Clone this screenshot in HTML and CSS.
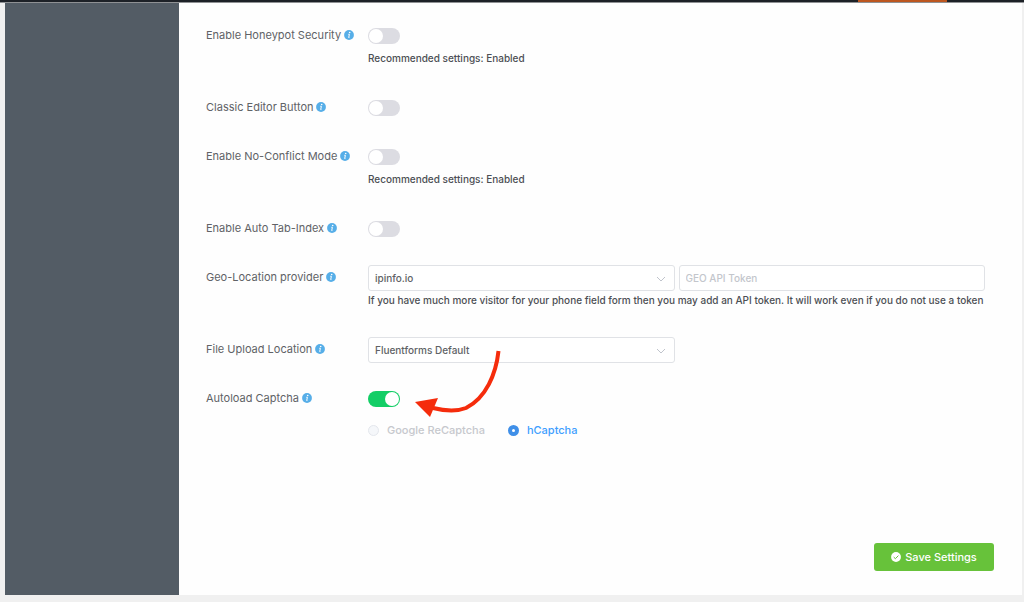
FILE: index.html
```
<!DOCTYPE html>
<html lang="en">
<head>
<meta charset="utf-8">
<title>Global Settings</title>
<link rel="stylesheet" href="styles.css">
</head>
<body>
<svg class="sprite" aria-hidden="true">
  <symbol id="info" viewBox="0 0 10 10">
    <circle cx="5" cy="5" r="4.9" fill="#56aee8"/>
    <circle cx="5.7" cy="2.5" r=".8" fill="#fff"/>
    <path d="M4.3 4.3h1.1L4.7 7.6h.7" fill="none" stroke="#fff" stroke-width="1"/>
  </symbol>
  <symbol id="chevron" viewBox="0 0 10 10">
    <path d="M1 3l4 4 4-4" fill="none" stroke="#c0c4cc" stroke-width="1"/>
  </symbol>
</svg>
<header class="topbar"><div class="topbar-tab"></div></header>
<div class="layout">
  <aside class="sidebar"></aside>
  <main class="content">
    <form class="form">
      <div class="row">
        <label class="label" for="honeypot">Enable Honeypot Security <svg class="info"><use href="#info"/></svg></label>
        <div class="control">
          <div class="line"><input class="switch" type="checkbox" role="switch" id="honeypot"></div>
          <p class="help">Recommended settings: Enabled</p>
        </div>
      </div>
      <div class="row">
        <label class="label" for="classic">Classic Editor Button <svg class="info"><use href="#info"/></svg></label>
        <div class="control">
          <div class="line"><input class="switch" type="checkbox" role="switch" id="classic"></div>
        </div>
      </div>
      <div class="row">
        <label class="label" for="conflict">Enable No-Conflict Mode <svg class="info"><use href="#info"/></svg></label>
        <div class="control">
          <div class="line"><input class="switch" type="checkbox" role="switch" id="conflict"></div>
          <p class="help">Recommended settings: Enabled</p>
        </div>
      </div>
      <div class="row">
        <label class="label" for="tabindex">Enable Auto Tab-Index <svg class="info"><use href="#info"/></svg></label>
        <div class="control">
          <div class="line"><input class="switch" type="checkbox" role="switch" id="tabindex"></div>
        </div>
      </div>
      <div class="row">
        <label class="label" for="geo">Geo-Location provider <svg class="info"><use href="#info"/></svg></label>
        <div class="control">
          <div class="fields">
            <div class="select">
              <select class="field" id="geo"><option>ipinfo.io</option></select>
              <svg class="chevron"><use href="#chevron"/></svg>
            </div>
            <input class="field" type="text" placeholder="GEO API Token" aria-label="GEO API Token">
          </div>
          <p class="help">If you have much more visitor for your phone field form then you may add an API token. It will work even if you do not use a token</p>
        </div>
      </div>
      <div class="row">
        <label class="label" for="upload">File Upload Location <svg class="info"><use href="#info"/></svg></label>
        <div class="control">
          <div class="fields">
            <div class="select">
              <select class="field" id="upload"><option>Fluentforms Default</option></select>
              <svg class="chevron"><use href="#chevron"/></svg>
            </div>
          </div>
        </div>
      </div>
      <div class="row">
        <label class="label" for="captcha">Autoload Captcha <svg class="info"><use href="#info"/></svg></label>
        <div class="control">
          <div class="line"><input class="switch" type="checkbox" role="switch" id="captcha" checked></div>
          <div class="radios">
            <label class="radio radio-off"><input type="radio" name="provider" disabled>Google ReCaptcha</label>
            <label class="radio"><input type="radio" name="provider" checked>hCaptcha</label>
          </div>
          <svg class="arrow" viewBox="0 0 88 72" aria-hidden="true">
            <path d="M84.500 3C82 26 72 50 52 60C42 64 31 63 19 60" fill="none" stroke="#f52c0c" stroke-width="4"/>
            <path d="M1 54L24 50L16 69z" fill="#f52c0c"/>
          </svg>
        </div>
      </div>
      <div class="actions">
        <button class="save" type="button">
          <svg class="check" viewBox="0 0 10 10" aria-hidden="true"><circle cx="5" cy="5" r="4.900" fill="#fff"/><path d="M2.700 5.100l1.700 1.600 3-3.100" fill="none" stroke="#67c23a" stroke-width="1"/></svg>
          Save Settings
        </button>
      </div>
    </form>
  </main>
</div>
</body>
</html>
```
FILE: styles.css
```
* { box-sizing: border-box; }
body {
  margin: 0;
  min-height: 100vh;
  display: flex;
  flex-direction: column;
  background: #f0f0f0;
  color: #4c4f54;
  font: 11px/18px Inter, "Liberation Sans", sans-serif;
}
.sprite { position: absolute; width: 0; height: 0; }
.topbar {
  height: 3px;
  padding-right: 77px;
  display: flex;
  justify-content: flex-end;
  background: #1d2127;
  border-bottom: 1px solid #8f9194;
}
.topbar-tab { width: 89px; background: #bd5720; }
.layout {
  flex: 1;
  display: flex;
  margin: 0 2px 7px 5px;
}
.sidebar { width: 174px; flex: none; background: #535c65; }
.content { flex: 1; min-width: 0; background: #fefefe; }
.form { padding: 20px 28px 24px 27px; }
.row {
  display: grid;
  grid-template-columns: 162px minmax(0, 1fr);
  margin-bottom: 23px;
  padding-right: 9px;
}
.label {
  display: flex;
  align-items: center;
  align-self: start;
  gap: 3px;
  line-height: 24px;
  color: #606266;
  white-space: nowrap;
}
.info { width: 10px; height: 10px; flex: none; }
.control { position: relative; }
.line { height: 26px; display: flex; align-items: center; }
.help {
  margin: 0;
  padding-bottom: 5px;
  font-size: 10px;
  font-weight: 500;
}
.switch {
  appearance: none;
  width: 32px;
  height: 16px;
  margin: 0;
  padding: 1px;
  display: flex;
  border-radius: 8px;
  background: #dcdce2;
}
.switch::before {
  content: "";
  width: 14px;
  height: 14px;
  border-radius: 50%;
  background: #fff;
}
.switch:checked { background: #13ce66; justify-content: flex-end; }
.fields {
  display: grid;
  grid-template-columns: 1fr 1fr;
  gap: 4px;
}
.select { position: relative; }
.field {
  appearance: none;
  display: block;
  width: 100%;
  height: 26px;
  margin: 0;
  padding: 0 6px;
  border: 1px solid #e0e2e6;
  border-radius: 3px;
  background: #fff;
  color: #606266;
  font: inherit;
  font-size: 10px;
  font-weight: 500;
}
.field::placeholder { color: #c3c6cc; }
.chevron {
  position: absolute;
  right: 9px;
  top: 9px;
  width: 10px;
  height: 10px;
  pointer-events: none;
}
.radios { display: flex; gap: 23px; margin-top: 8px; line-height: 20px; }
.radio {
  display: flex;
  align-items: center;
  gap: 8px;
  color: #409eff;
  font-weight: 500;
}
.radio input {
  appearance: none;
  width: 11px;
  height: 11px;
  margin: 0;
  border: 4px solid #3f8fe8;
  border-radius: 50%;
  background: #fff;
}
.radio-off { color: #c6c8cd; }
.radio-off input { border: 1px solid #e4e7ed; background: #f5f7fa; }
.arrow {
  position: absolute;
  left: 46px;
  top: -38px;
  width: 88px;
  height: 72px;
  pointer-events: none;
}
.actions { display: flex; justify-content: flex-end; padding-top: 80px; }
.save {
  display: flex;
  align-items: center;
  justify-content: center;
  gap: 4px;
  width: 120px;
  height: 28px;
  padding: 0;
  border: 0;
  border-radius: 3px;
  background: #67c23a;
  color: #fff;
  font: inherit;
  font-weight: 500;
}
.check { width: 10px; height: 10px; }
```
